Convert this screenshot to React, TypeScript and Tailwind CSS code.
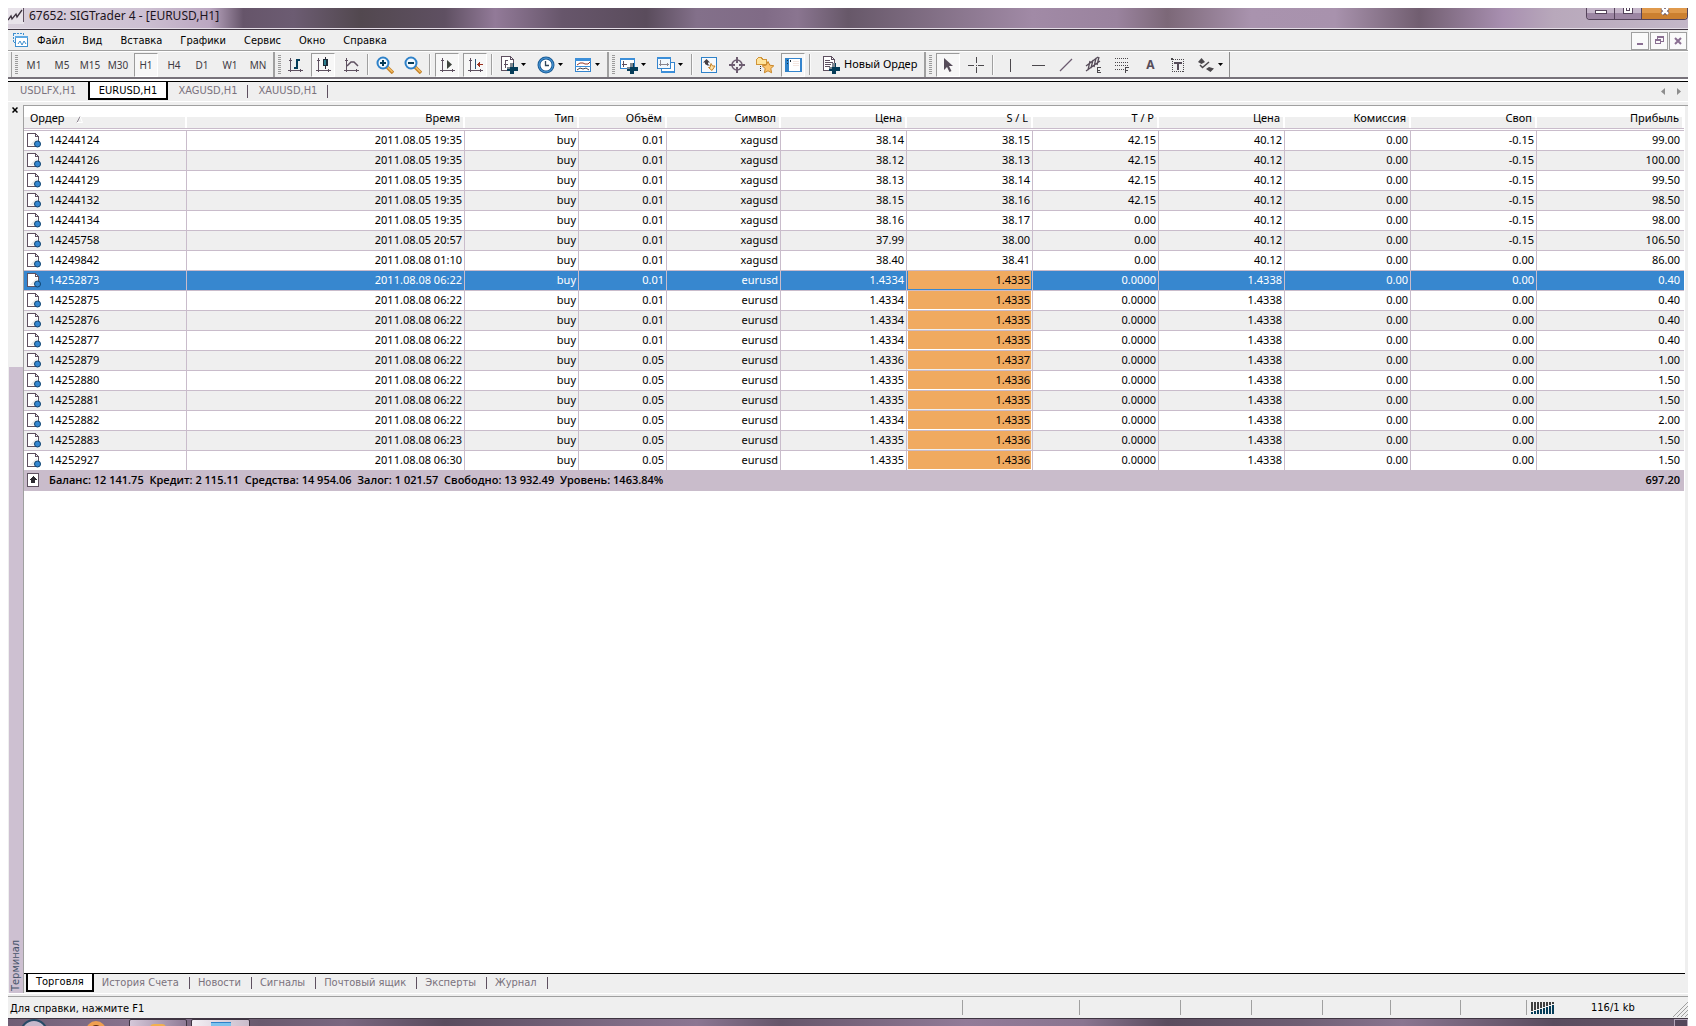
import type { ReactNode } from 'react'
import { useState } from 'react'
import clsx from 'clsx'

interface Order {
  id: string
  time: string
  volume: string
  symbol: string
  open: string
  sl: string
  tp: string
  price: string
  swap: string
  profit: string
}

const order = (row: string): Order => {
  const [id, time, volume, symbol, open, sl, tp, price, swap, profit] = row.split('|')
  return { id, time, volume, symbol, open, sl, tp, price, swap, profit }
}

const ORDERS: Order[] = [
  '14244124|2011.08.05 19:35|0.01|xagusd|38.14|38.15|42.15|40.12|-0.15|99.00',
  '14244126|2011.08.05 19:35|0.01|xagusd|38.12|38.13|42.15|40.12|-0.15|100.00',
  '14244129|2011.08.05 19:35|0.01|xagusd|38.13|38.14|42.15|40.12|-0.15|99.50',
  '14244132|2011.08.05 19:35|0.01|xagusd|38.15|38.16|42.15|40.12|-0.15|98.50',
  '14244134|2011.08.05 19:35|0.01|xagusd|38.16|38.17|0.00|40.12|-0.15|98.00',
  '14245758|2011.08.05 20:57|0.01|xagusd|37.99|38.00|0.00|40.12|-0.15|106.50',
  '14249842|2011.08.08 01:10|0.01|xagusd|38.40|38.41|0.00|40.12|0.00|86.00',
  '14252873|2011.08.08 06:22|0.01|eurusd|1.4334|1.4335|0.0000|1.4338|0.00|0.40',
  '14252875|2011.08.08 06:22|0.01|eurusd|1.4334|1.4335|0.0000|1.4338|0.00|0.40',
  '14252876|2011.08.08 06:22|0.01|eurusd|1.4334|1.4335|0.0000|1.4338|0.00|0.40',
  '14252877|2011.08.08 06:22|0.01|eurusd|1.4334|1.4335|0.0000|1.4338|0.00|0.40',
  '14252879|2011.08.08 06:22|0.05|eurusd|1.4336|1.4337|0.0000|1.4338|0.00|1.00',
  '14252880|2011.08.08 06:22|0.05|eurusd|1.4335|1.4336|0.0000|1.4338|0.00|1.50',
  '14252881|2011.08.08 06:22|0.05|eurusd|1.4335|1.4335|0.0000|1.4338|0.00|1.50',
  '14252882|2011.08.08 06:22|0.05|eurusd|1.4334|1.4335|0.0000|1.4338|0.00|2.00',
  '14252883|2011.08.08 06:23|0.05|eurusd|1.4335|1.4336|0.0000|1.4338|0.00|1.50',
  '14252927|2011.08.08 06:30|0.05|eurusd|1.4335|1.4336|0.0000|1.4338|0.00|1.50',
].map(order)

const COLUMNS = [
  { title: 'Ордер', width: 'w-[163px]' },
  { title: 'Время', width: 'w-[278px]' },
  { title: 'Тип', width: 'w-[114px]' },
  { title: 'Объём', width: 'w-[88px]' },
  { title: 'Символ', width: 'w-[114px]' },
  { title: 'Цена', width: 'w-[126px]' },
  { title: 'S / L', width: 'w-[126px]' },
  { title: 'T / P', width: 'w-[126px]' },
  { title: 'Цена', width: 'w-[126px]' },
  { title: 'Комиссия', width: 'w-[126px]' },
  { title: 'Своп', width: 'w-[126px]' },
  { title: 'Прибыль', width: '' },
]

const MENU = ['Файл', 'Вид', 'Вставка', 'Графики', 'Сервис', 'Окно', 'Справка']
const PERIODS = ['M1', 'M5', 'M15', 'M30', 'H1', 'H4', 'D1', 'W1', 'MN']
const CHARTS = ['USDLFX,H1', 'EURUSD,H1', 'XAGUSD,H1', 'XAUUSD,H1']
const TERMINAL_TABS = ['Торговля', 'История Счета', 'Новости', 'Сигналы', 'Почтовый ящик', 'Эксперты', 'Журнал']

function Icon({ children, size = 18 }: { children: ReactNode; size?: number }) {
  return (
    <svg width={size} height={size} viewBox={`0 0 ${size} ${size}`} fill="none" className="shrink-0" shapeRendering="crispEdges" aria-hidden="true">
      {children}
    </svg>
  )
}

// Axes shared by the chart type icons
const Axes = () => (
  <path d="M4.500 2v14M2 14.500h15M3 4.500h3M14.500 13v3" stroke="#5e5060" />
)

const Plus = () => (
  <g>
    <path d="M10 7h4v4h4v4h-4v3h-4v-3H7v-4h3z" fill="#053c58" />
    <path d="M10 7h3v4h-3zM7 11h3v2H7z" fill="#7f8790" />
  </g>
)

const BarsIcon = () => (
  <Icon>
    <Axes />
    <path d="M10 3h2v10h-2zM8 11h2v2H8zM12 3h2v2h-2z" fill="#053c58" />
  </Icon>
)

const CandlesIcon = () => (
  <Icon>
    <Axes />
    <path d="M11 1h1v12h-1z" fill="#2f2a35" />
    <path d="M9 3h5v7H9z" fill="#1d2c38" />
    <path d="M10 4h2v5h-2z" fill="#2b8090" />
  </Icon>
)

const LineIcon = () => (
  <Icon>
    <Axes />
    <path d="M5 10l4-4h3l4 4" stroke="#5e5060" strokeWidth="1.500" shapeRendering="auto" />
  </Icon>
)

function ZoomIcon({ plus }: { plus?: boolean }) {
  return (
    <Icon>
      <g shapeRendering="auto">
        <path d="M11 11l6 6" stroke="#c48229" strokeWidth="3.500" />
        <path d="M11.500 11l5 5" stroke="#f5bf62" strokeWidth="1.500" />
        <circle cx="7" cy="7" r="5.500" fill="#f4faff" stroke="#2f82c9" strokeWidth="2" />
      </g>
      <path d={plus ? 'M4 7h6M7 4v6' : 'M4 7h6'} stroke="#053c58" strokeWidth="2" />
    </Icon>
  )
}

const AutoScrollIcon = () => (
  <Icon>
    <Axes />
    <path d="M9 4l5 4.500L9 13z" fill="#3f443e" shapeRendering="auto" />
  </Icon>
)

const ShiftIcon = () => (
  <Icon>
    <Axes />
    <path d="M9.500 3v10" stroke="#2c5474" />
    <path d="M11 8.500h6M13.500 6v5M12.500 7v3" stroke="#9b2f1c" />
  </Icon>
)

const IndicatorsIcon = () => (
  <Icon>
    <path d="M1.500.5h9l3 3v11h-12z" fill="#fff" stroke="#5e5060" />
    <path d="M10.500.5v3h3M8 4.500H5.500V12M4 8.500h4" stroke="#5e5060" />
    <Plus />
  </Icon>
)

const ClockIcon = () => (
  <Icon>
    <g shapeRendering="auto">
      <circle cx="9" cy="9" r="7" fill="#fff" stroke="#1c5c95" strokeWidth="3" />
      <circle cx="9" cy="9" r="7" stroke="#4c9ee0" strokeWidth="1" />
      <path d="M8.500 5v4.500H12" stroke="#30485c" strokeWidth="1.300" />
    </g>
  </Icon>
)

const TemplateIcon = () => (
  <Icon>
    <path d="M1.500 2.500h15v13h-15z" fill="#fff" stroke="#3585ce" />
    <path d="M1 2h16v3H1zM1 10h16v1H1z" fill="#3c8fd9" />
    <path d="M3 9l3-2h3l2 1h3l2-2" stroke="#943629" shapeRendering="auto" />
    <path d="M3 14l3-2 3 1 3-1 3 2" stroke="#454148" shapeRendering="auto" />
  </Icon>
)

const NewChartIcon = () => (
  <Icon>
    <path d="M.5 2.500h14v10H.5z" fill="#fff" stroke="#3585ce" />
    <path d="M0 2h15v2H0z" fill="#3c8fd9" />
    <path d="M3.500 5v6M2 8.500h5" stroke="#5e5060" />
    <Plus />
  </Icon>
)

const WindowsIcon = () => (
  <Icon>
    <path d="M4.500 6.500h13v10h-13z" fill="#fff" stroke="#3585ce" />
    <path d="M.5 1.500h13v11H.5z" fill="#f2f8fd" stroke="#3585ce" />
    <path d="M0 1h14v2H0zM4 15h13v2H4z" fill="#3c8fd9" />
    <path d="M3.500 4v6M2 8.500h10M10.500 7v3" stroke="#8b8790" />
  </Icon>
)

const MarketIcon = () => (
  <Icon>
    <path d="M1.500 1.500h15v15h-15z" fill="#f7fafd" stroke="#2f82c9" strokeWidth="1.500" />
    <g shapeRendering="auto">
      <path d="M6.500 3l3.500 3.500H8V8l2 1.500H7.500L5 8V6.500H3z" fill="#443f46" />
      <path d="M11 7.500l1.500 2.500H15L12 14.500 8.500 11.500H10z" fill="#ffe4a8" stroke="#c48229" />
    </g>
  </Icon>
)

const CrosshairIcon = () => (
  <Icon>
    <circle cx="9" cy="9" r="5" stroke="#6d5d70" strokeWidth="1.500" shapeRendering="auto" />
    <path d="M8 1h2v6H8zM8 11h2v6H8zM1 8h6v2H1zM11 8h6v2h-6z" fill="#6d5d70" />
  </Icon>
)

const NavigatorIcon = () => (
  <Icon>
    <path d="M.5 3.500l2-2h3l1 2h4v5H.5z" fill="#ffe49d" stroke="#d09438" />
    <path d="M4.500 10v6" stroke="#2c2a30" strokeDasharray="1 1" />
    <path d="M12 5.500l1.800 3.700 4 .6-3 2.700.8 4.300-3.600-2-3.600 2 .8-4.300-3-2.700 4-.6z" fill="#fbc46e" stroke="#c98729" shapeRendering="auto" />
  </Icon>
)

const TerminalIcon = () => (
  <Icon>
    <path d="M2 2.500h15v13H2z" fill="#fff" stroke="#3585ce" strokeWidth="1.500" />
    <path d="M1 2h4v14H1z" fill="#2f82c9" />
    <path d="M3 4h1v1H3zM3 7h1v1H3zM6 4h1v2H6z" fill="#1c2c3a" />
    <path d="M9 5.500h6M9 7.500h6M9 9.500h6" stroke="#f3e6e0" />
  </Icon>
)

const NewOrderIcon = () => (
  <Icon>
    <path d="M1.500.5h8l3 3v11h-11z" fill="#fff" stroke="#5e5060" />
    <path d="M9.500.5v3h3M3 4.500h5M3 6.500h8M3 8.500h6M3 10.500h5" stroke="#5e5060" />
    <Plus />
  </Icon>
)

const CursorIcon = () => (
  <Icon>
    <path d="M5 2v12l3-3 2.500 5 2-1-2.500-5h4z" fill="#564c59" shapeRendering="auto" />
  </Icon>
)

const CrossIcon = () => (
  <Icon>
    <path d="M9.500 1v6M9.500 11v6M1 9.500h6M11 9.500h6M9 9.500h1" stroke="#4b484c" />
  </Icon>
)

const VLineIcon = () => <Icon><path d="M9.500 3v13" stroke="#4b484c" /></Icon>
const HLineIcon = () => <Icon><path d="M3 9.500h13" stroke="#4b484c" /></Icon>
const TrendIcon = () => <Icon><path d="M3 15L15 3" stroke="#6b5a6f" strokeWidth="1.300" shapeRendering="auto" /></Icon>

const ChannelIcon = () => (
  <Icon>
    <g stroke="#554b58" strokeWidth="1.300" shapeRendering="auto">
      <path d="M1 10L13 1M1 15L15 5M5 5l-2 9M8 4l-2 8M11 2l-2 9M14 1l-2 8" />
    </g>
    <path d="M16 11.500h-3.500v5H16M12 14h3" stroke="#4b484c" />
  </Icon>
)

const FiboIcon = () => (
  <Icon>
    <path d="M2 2.500h14M2 6.500h14M2 9.500h14M2 13.500h9" stroke="#4b484c" strokeDasharray="1 1" />
    <path d="M16 11.500h-3.500v5M12 14h3" stroke="#4b484c" />
  </Icon>
)

const LabelIcon = () => (
  <Icon>
    <path d="M3.500 3.500h11v12h-11z" stroke="#4b484c" strokeDasharray="1 1" />
    <path d="M2 2h2v2H2z" fill="#4b484c" />
    <path d="M5 6h8v2h-3v6H8V8H5z" fill="#554b58" />
  </Icon>
)

const ArrowsIcon = () => (
  <Icon>
    <g shapeRendering="auto">
      <path d="M1 6l3.500-4L8 6l-3.500 2zM9 13l3-2 5 1.500-3.500 3.500z" fill="#4b484c" />
      <path d="M3 9l2.500 2.500L12 6" stroke="#4b484c" strokeWidth="1.500" />
    </g>
  </Icon>
)

const OrderIcon = () => (
  <Icon size={15}>
    <path d="M.5.500h8l3 3v10H.5z" fill="#fff" stroke="#5e5060" />
    <path d="M2 12l8-8v8z" fill="#ebebeb" />
    <path d="M8.500.500v3h3" stroke="#5e5060" />
    <circle cx="10.500" cy="11" r="3" fill="#3487d0" stroke="#0c4270" shapeRendering="auto" />
  </Icon>
)

function Group({ children, last }: { children: ReactNode; last?: boolean }) {
  return (
    <div className={clsx('flex items-center pl-[3px]', last ? 'border-r border-[#8d8d8d]' : 'border-r-2 border-[#a0a0a0] pr-px')}>
      <span className="h-[19px] w-[3px] bg-[repeating-linear-gradient(#9b9b9b_0_1px,#efefef_1px_2px)]" />
      {children}
    </div>
  )
}

function Tool({ label, pressed, children }: { label: string; pressed?: boolean; children: ReactNode }) {
  return (
    <button
      type="button"
      aria-label={label}
      aria-pressed={pressed}
      className={clsx(
        'mx-0.5 flex h-6 w-6 items-center justify-center border',
        pressed ? 'border-[#9b9b9b] border-r-white border-b-white bg-[#f7f7f7]' : 'border-transparent',
      )}
    >
      {children}
    </button>
  )
}

function DropTool({ label, children }: { label: string; children: ReactNode }) {
  return (
    <button type="button" aria-label={label} className="mx-0.5 flex h-6 w-[33px] items-center gap-[3px] pl-[3px]">
      {children}
      <Caret />
    </button>
  )
}

const Caret = () => (
  <svg width="5" height="3" viewBox="0 0 5 3" aria-hidden="true">
    <path d="M0 0h5L2.500 3z" fill="#000" />
  </svg>
)

const Separator = () => <span className="mx-[2px] my-0.5 w-0.5 self-stretch border-l border-[#a0a0a0] bg-[#fafafa]" />

function TitleBar() {
  return (
    <header className="flex h-[22px] shrink-0 items-start justify-between overflow-hidden border-b border-[#3f3542] bg-[linear-gradient(90deg,#d9d0dc_0,#cdc0d2_8%,#bba7c1_12%,#66556a_14%,#6c5c72_17%,#52484f_21%,#5f5062_26%,#927a98_29%,#67566b_33%,#5a4c5c_38%,#83708a_41%,#806b86_45%,#8a7590_47%,#675869_50%,#a18aa6_61%,#9a839e_66%,#7c6878_69%,#a993ae_74%,#a892ad_79%,#715e70_84%,#a88fb0_89%,#b8a8bb_92%,#c3b7c8_100%)] shadow-[inset_0_-1px_#e4dde6]">
      <h1 className="flex items-center pr-2 text-xs leading-[14px] text-[#1c1420]">
        <svg width="16" height="16" viewBox="0 0 16 16" className="mr-[5px] bg-[#e8e3ea]" fill="none" aria-hidden="true">
          <path d="M0 12l3-4 1 3 4-5 1 3 5-7" stroke="#3c323f" strokeWidth="1.300" />
          <path d="M15.500 0v14" stroke="#5e5060" />
        </svg>
        67652: SIGTrader 4 - [EURUSD,H1]
      </h1>
      <div className="flex h-3 overflow-hidden rounded-b border border-t-0 border-[#54435a]">
        <button type="button" aria-label="Свернуть" className="flex h-3 w-7 justify-center border-r border-[#54435a] bg-[linear-gradient(#c4b5c9_45%,#9c86a3_45%)] pt-0.5">
          <span className="h-1 w-3 border border-[#54435a] bg-white" />
        </button>
        <button type="button" aria-label="Развернуть" className="flex h-3 w-[27px] justify-center border-r border-[#54435a] bg-[linear-gradient(#c4b5c9_45%,#9c86a3_45%)]">
          <span className="flex h-1.5 w-2.5 justify-center border border-t-0 border-[#54435a] bg-white">
            <span className="h-[3px] w-1 border border-t-0 border-[#54435a]" />
          </span>
        </button>
        <button type="button" aria-label="Закрыть" className="flex h-3 w-[45px] justify-center bg-[linear-gradient(#e09a4c_45%,#cc8030_45%)]">
          <svg width="12" height="8" viewBox="0 0 12 8" aria-hidden="true">
            <path d="M3 0l6 6M9 0L3 6" stroke="#54435a" strokeWidth="4" />
            <path d="M3 0l6 6M9 0L3 6" stroke="#fff" strokeWidth="2.500" />
          </svg>
        </button>
      </div>
    </header>
  )
}

function MenuBar() {
  const frame = 'flex h-[18px] w-[18px] items-center justify-center border border-[#a0a0a0] bg-[#fafafa]'
  return (
    <nav aria-label="Меню" className="flex h-[21px] shrink-0 items-center border-b border-[#a0a0a0] pt-px pr-px pl-[5px] font-['DejaVu_Sans_Condensed',sans-serif] text-[11px]">
      <svg width="15" height="15" viewBox="0 0 15 15" fill="none" shapeRendering="crispEdges" aria-hidden="true">
        <path d="M.5.500h10v9H.5z" fill="#e4f1fb" stroke="#3f8fce" strokeDasharray="2 1" />
        <path d="M2.500 3.500h12v10h-12z" fill="#fff" stroke="#3f8fce" />
        <path d="M2 3h13v2H2z" fill="#5fa9e2" />
        <path d="M5 11l2-3 2 4 2-4 2 3" stroke="#3f8fce" shapeRendering="auto" />
      </svg>
      {MENU.map(item => (
        <button key={item} type="button" className="px-[9px] pt-px">{item}</button>
      ))}
      <div className="ml-auto flex gap-px">
        <button type="button" aria-label="Свернуть окно" className={frame}>
          <span className="mt-1.5 h-0.5 w-1.5 bg-[#8a6f92]" />
        </button>
        <button type="button" aria-label="Восстановить окно" className={frame}>
          <svg width="9" height="9" viewBox="0 0 9 9" fill="none" stroke="#8a6f92" shapeRendering="crispEdges" aria-hidden="true">
            <path d="M2.500 3V.5h6v5H6M2 1.500h7M.5 3.500h5v4h-5zM0 4.500h6" />
          </svg>
        </button>
        <button type="button" aria-label="Закрыть окно" className={frame}>
          <svg width="8" height="8" viewBox="0 0 8 8" stroke="#8a6f92" strokeWidth="2" aria-hidden="true">
            <path d="M1 1l6 6M7 1L1 7" />
          </svg>
        </button>
      </div>
    </nav>
  )
}

function Toolbar() {
  const [period, setPeriod] = useState('H1')
  return (
    <div role="toolbar" aria-label="Инструменты" className="flex h-7 shrink-0 border-t border-b-2 border-t-white border-b-[#77727a] pl-[3px]">
      <div className="flex border-l border-[#a0a0a0]">
        <Group>
          <div className="flex pl-0.5">
            {PERIODS.map(p => (
              <button
                key={p}
                type="button"
                onClick={() => setPeriod(p)}
                aria-pressed={p === period}
                className={clsx(
                  'mx-0.5 h-6 w-6 border pt-px text-center text-[10px] text-[#3f3a42]',
                  p === period ? 'border-[#9b9b9b] border-r-white border-b-white bg-[#f7f7f7]' : 'border-transparent',
                )}
              >
                <span className="-mx-1">{p}</span>
              </button>
            ))}
          </div>
        </Group>
      </div>
      <Group>
        <Tool label="Бары"><BarsIcon /></Tool>
        <Tool label="Японские свечи" pressed><CandlesIcon /></Tool>
        <Tool label="Линия"><LineIcon /></Tool>
        <Separator />
        <Tool label="Увеличить"><ZoomIcon plus /></Tool>
        <Tool label="Уменьшить"><ZoomIcon /></Tool>
        <Separator />
        <Tool label="Автопрокрутка" pressed><AutoScrollIcon /></Tool>
        <Tool label="Сдвиг графика" pressed><ShiftIcon /></Tool>
        <Separator />
        <DropTool label="Индикаторы"><IndicatorsIcon /></DropTool>
        <DropTool label="Периоды"><ClockIcon /></DropTool>
        <DropTool label="Шаблоны"><TemplateIcon /></DropTool>
      </Group>
      <Group>
        <DropTool label="Новый график"><NewChartIcon /></DropTool>
        <DropTool label="Профили"><WindowsIcon /></DropTool>
        <Separator />
        <Tool label="Обзор рынка"><MarketIcon /></Tool>
        <Tool label="Окно данных"><CrosshairIcon /></Tool>
        <Tool label="Навигатор"><NavigatorIcon /></Tool>
        <Tool label="Терминал" pressed><TerminalIcon /></Tool>
        <Separator />
        <button type="button" className="mx-0.5 flex h-6 items-center gap-1 pr-1 pl-[7px] text-[11px]">
          <NewOrderIcon />
          Новый Ордер
        </button>
      </Group>
      <Group last>
        <div className="flex items-center pl-0.5">
          <Tool label="Курсор" pressed><CursorIcon /></Tool>
          <Tool label="Перекрестие"><CrossIcon /></Tool>
          <Separator />
          <Tool label="Вертикальная линия"><VLineIcon /></Tool>
          <Tool label="Горизонтальная линия"><HLineIcon /></Tool>
          <Tool label="Трендовая линия"><TrendIcon /></Tool>
          <Tool label="Канал"><ChannelIcon /></Tool>
          <Tool label="Фибоначчи"><FiboIcon /></Tool>
          <Tool label="Текст"><span className="text-xs font-bold text-[#564c59]">A</span></Tool>
          <Tool label="Метка"><LabelIcon /></Tool>
          <DropTool label="Стрелки"><ArrowsIcon /></DropTool>
        </div>
      </Group>
    </div>
  )
}

function ChartTabs() {
  return (
    <div className="flex h-[23px] shrink-0 items-start border-b border-white shadow-[inset_0_2px_#fff]">
      <div className="mt-0.5 flex h-5 w-full border-t border-black">
        {CHARTS.map(name => {
          const active = name === 'EURUSD,H1'
          return (
            <button
              key={name}
              type="button"
              className={clsx(
                "w-20 pt-px text-center font-['DejaVu_Sans_Condensed',sans-serif] text-[11px]",
                active ? 'h-[18px] border-2 border-t-0 border-black bg-white text-black' : 'h-[17px] text-[#7a727d]',
                name.startsWith('XA') && 'bg-[linear-gradient(#5e5060,#5e5060)] bg-[length:1px_13px] bg-[position:right_3px] bg-no-repeat',
              )}
            >
              {name}
            </button>
          )
        })}
        <div className="ml-auto flex items-center gap-3 pr-[7px]">
          <svg width="4" height="7" viewBox="0 0 4 7" aria-hidden="true"><path d="M4 0v7L0 3.500z" fill="#8d8d8d" /></svg>
          <svg width="4" height="7" viewBox="0 0 4 7" aria-hidden="true"><path d="M0 0v7l4-3.500z" fill="#8d8d8d" /></svg>
        </div>
      </div>
    </div>
  )
}

function OrdersTable() {
  const [selected, setSelected] = useState('14252873')
  return (
    <table className="w-full table-fixed border-separate border-spacing-0 text-right text-[11px] leading-[18px] whitespace-nowrap">
      <thead>
        <tr>
          {COLUMNS.map((c, i) => (
            <th key={i} scope="col" className={clsx('border-b border-[#c9bccb] bg-[#c9bccb] p-0 font-normal', c.width)}>
              <div
                className={clsx(
                  'mb-px h-[22px] border-r-2 border-white bg-[linear-gradient(#fff_50%,#efefef_50%)] pr-[3px] leading-[24px]',
                  i === 0 && 'pl-1.5 text-left',
                  i === COLUMNS.length - 1 && 'pr-1',
                )}
              >
                {c.title}
                {i === 0 && (
                  <svg width="7" height="7" viewBox="0 0 7 7" className="ml-3 inline" fill="none" aria-hidden="true">
                    <path d="M1 6.500L4 .5" stroke="#8d8590" />
                    <path d="M4 .5l2.500 6H1" stroke="#fff" />
                  </svg>
                )}
              </div>
              <div className="h-px bg-white" />
            </th>
          ))}
        </tr>
      </thead>
      <tbody>
        {ORDERS.map((o, row) => {
          const on = o.id === selected
          const cell = 'border-r border-b border-[#c9bccb] p-0 pr-[2px]'
          return (
            <tr
              key={o.id}
              onClick={() => setSelected(o.id)}
              className={clsx('h-5 align-top', on ? 'bg-[#3787cf] text-white' : row % 2 ? 'bg-[#efefef]' : 'bg-white')}
            >
              <td className={cell}>
                <div className="flex items-start gap-[7px] pt-0.5 pl-[3px]">
                  <OrderIcon />
                  <span className="-mt-0.5">{o.id}</span>
                </div>
              </td>
              <td className={cell}>{o.time}</td>
              <td className={cell}>buy</td>
              <td className={cell}>{o.volume}</td>
              <td className={cell}>{o.symbol}</td>
              <td className={cell}>{o.open}</td>
              {o.symbol === 'eurusd' ? (
                <td className="border-r border-b border-[#c9bccb] p-0">
                  <div className="mx-px mb-px h-[18px] bg-[#f0aa60] pr-px text-black">{o.sl}</div>
                </td>
              ) : (
                <td className={cell}>{o.sl}</td>
              )}
              <td className={cell}>{o.tp}</td>
              <td className={cell}>{o.price}</td>
              <td className={cell}>0.00</td>
              <td className={cell}>{o.swap}</td>
              <td className="border-b border-[#c9bccb] p-0 pr-1">{o.profit}</td>
            </tr>
          )
        })}
      </tbody>
      <tfoot>
        <tr className="h-5 bg-[#c9bccb] align-top font-['Open_Sans',sans-serif] font-semibold">
          <td colSpan={11} className="p-0">
            <div className="flex items-center gap-2.5 pl-[3px] whitespace-pre">
              <svg width="12" height="14" viewBox="0 0 12 14" shapeRendering="crispEdges" aria-hidden="true">
                <path d="M.5.500h11v13H.5z" fill="#fff" stroke="#5e5060" />
                <path d="M6 3l4 4H8v3H4V7H2z" fill="#2c2a30" />
              </svg>
              Баланс: 12 141.75  Кредит: 2 115.11  Средства: 14 954.06  Залог: 1 021.57  Свободно: 13 932.49  Уровень: 1463.84%
            </div>
          </td>
          <td className="p-0 pr-1">697.20</td>
        </tr>
      </tfoot>
    </table>
  )
}

function TerminalTabs() {
  return (
    <div className="mr-[3px] flex h-5 shrink-0 border-t border-black pl-0.5 font-['DejaVu_Sans_Condensed',sans-serif] text-[11px]">
      {TERMINAL_TABS.map((name, i) => (
        <button
          key={name}
          type="button"
          className={clsx(
            i === 0
              ? 'h-[18px] border-2 border-t-0 border-black bg-white px-2'
              : 'h-[18px] bg-[linear-gradient(#5e5060,#5e5060)] bg-[length:1px_12px] bg-[position:right_3px] bg-no-repeat pr-[11px] pl-2 text-[#7a727d]',
          )}
        >
          {name}
        </button>
      ))}
    </div>
  )
}

function Terminal() {
  return (
    <section className="flex min-h-0 flex-1 pt-[3px]">
      <div className="flex w-[15px] shrink-0 flex-col items-end">
        <button type="button" aria-label="Закрыть терминал" className="mt-0.5 mr-[5px]">
          <svg width="6" height="6" viewBox="0 0 6 6" stroke="#000" strokeWidth="1.500" aria-hidden="true">
            <path d="M.5.500l5 5M5.500.500l-5 5" />
          </svg>
        </button>
        <div className="mt-auto flex h-[70.5%] w-[14px] items-start justify-center bg-[#cdc0d1]">
          <span className="h-full rotate-180 pt-0.5 text-left font-['DejaVu_Sans_Condensed',sans-serif] text-[11px] leading-[14px] text-[#46546a] [writing-mode:vertical-rl]">Терминал</span>
        </div>
      </div>
      <div className="flex min-w-0 flex-1 flex-col border-t border-l border-[#a0a0a0]">
        <main className="mr-[3px] flex-1 overflow-hidden border-r border-white bg-white">
          <OrdersTable />
        </main>
        <TerminalTabs />
      </div>
    </section>
  )
}

function StatusBar() {
  const pane = 'my-[3px] border-l border-[#a0a0a0]'
  return (
    <footer className="flex h-[23px] shrink-0 border-t border-b border-t-[#a0a0a0] border-b-[#3f3542] font-['DejaVu_Sans_Condensed',sans-serif] text-[11px] leading-[24px]">
      <div className="flex-1 pl-0.5">Для справки, нажмите F1</div>
      <div className={clsx(pane, 'w-[117px]')} />
      <div className={clsx(pane, 'w-[101px]')} />
      <div className={clsx(pane, 'w-[71px]')} />
      <div className={clsx(pane, 'w-[71px]')} />
      <div className={clsx(pane, 'w-[68px]')} />
      <div className={clsx(pane, 'w-[70px]')} />
      <div className={clsx(pane, 'w-[66px]')} />
      <div className={clsx(pane, 'flex w-[162px] items-center pl-1')}>
        <svg width="24" height="12" viewBox="0 0 24 12" shapeRendering="crispEdges" aria-hidden="true">
          {[0, 1, 2, 3, 4, 5, 6, 7].map(i => (
            <g key={i}>
              <rect x={i * 3} y="0" width="2" height={9 - i} fill="#3f3f3f" />
              <rect x={i * 3} y={10 - i} width="2" height={2 + i} fill="#053c58" />
            </g>
          ))}
        </svg>
        <span className="ml-9">116/1 kb</span>
        <svg width="15" height="15" viewBox="0 0 15 15" className="mt-1 ml-auto" fill="none" stroke="#a0a0a0" aria-hidden="true">
          <path d="M0 15L15 0M4 15L15 4M8 15l7-7M12 15l3-3" />
        </svg>
      </div>
    </footer>
  )
}

// Only the upper edge of the system taskbar is visible
function Taskbar() {
  return (
    <div className="flex h-[7px] shrink-0 overflow-hidden bg-[linear-gradient(90deg,#6f5d74_0,#8a7590_8%,#6a5a6e_15%,#7a6780_20%,#5a4c5e_26%,#7d6a83_36%,#8c7692_41%,#66566a_46%,#927b98_57%,#8a7590_64%,#5a4c5e_69%,#6f5f74_77%,#8a7590_83%,#5a4c5e_92%,#6a5a6e_100%)]">
      <span className="ml-3 h-7 w-7 rounded-full border-2 border-[#274a66] bg-[#c5b8cb]" />
      <span className="mt-0.5 ml-[38px] h-5 w-5 rounded-full border-4 border-[#f0a050] bg-[#5c2a12]" />
      <span className="ml-[23px] flex h-5 w-[58px] justify-center rounded-t-xs border border-[#3f3542] bg-[linear-gradient(90deg,#d5c8d9,#8f7b96)] pt-1">
        <span className="h-2 w-4 rounded-t-sm bg-[#f2b04e]" />
      </span>
      <span className="ml-1 flex h-5 w-[59px] justify-center rounded-t-xs border border-[#3f3542] bg-[linear-gradient(90deg,#f4f0f5,#c9bccb)] pt-0.5">
        <span className="h-2 w-5 border-t border-[#2f82c9] bg-[#7cc3ee]" />
      </span>
      <span className="ml-auto h-5 w-3.5 border border-[#b5a6ba] bg-[#54465a]" />
    </div>
  )
}

export default function App() {
  return (
    <div className="h-screen overflow-hidden bg-white px-2 pt-2 font-['Noto_Sans','Open_Sans',sans-serif] text-black">
      <div className="flex h-full flex-col bg-[#efefef]">
        <TitleBar />
        <MenuBar />
        <Toolbar />
        <ChartTabs />
        <Terminal />
        <div className="h-[3px] shrink-0 border-t border-white" />
        <StatusBar />
        <Taskbar />
      </div>
    </div>
  )
}
